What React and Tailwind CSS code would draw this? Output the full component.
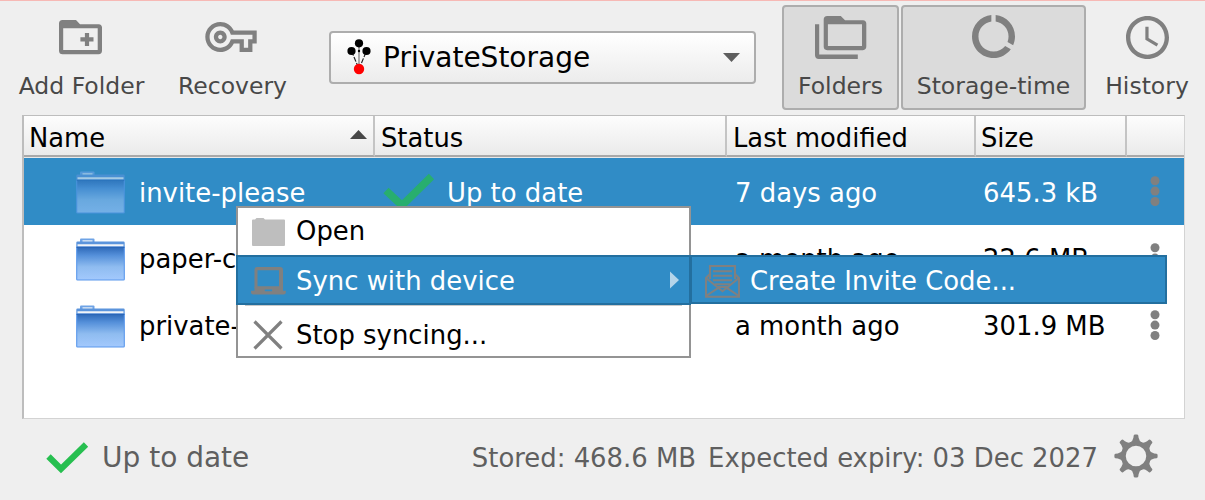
import React from "react";

const GREY = "#808080";

function AddFolderIcon() {
  return (
    <svg width="43" height="35" viewBox="0 0 43 35" fill={GREY}>
      <path fillRule="evenodd" d="M3.5 0H17l4 4.2h18.7a3.5 3.5 0 0 1 3.3 3.4v23.2a3.6 3.6 0 0 1-3.4 3.5H3.6A3.6 3.6 0 0 1 0 30.8V3.6A3.6 3.6 0 0 1 3.5 0zM4.2 8.3V30h34.5V8.3z" />
      <path d="M25.9 13h4.2v4.3h4.4v4.2h-4.4v4.400h-4.200v-4.400h-4.500v-4.200h4.500z" />
    </svg>
  );
}

function KeyIcon() {
  return (
    <svg width="52" height="30" viewBox="0 5 24 14" fill={GREY}>
      <path d="M22 19h-6v-4h-2.68c-1.14 2.42-3.6 4-6.32 4-3.86 0-7-3.14-7-7s3.14-7 7-7c2.72 0 5.17 1.58 6.32 4H24v6h-2v4zm-4-2h2v-4h2v-2H11.94l-.23-.67C11.01 8.34 9.11 7 7 7c-2.76 0-5 2.24-5 5s2.24 5 5 5c2.11 0 4.01-1.34 4.71-3.33l.23-.67H18v4zM7 15c-1.65 0-3-1.35-3-3s1.35-3 3-3 3 1.35 3 3-1.35 3-3 3zm0-4c-.55 0-1 .45-1 1s.45 1 1 1 1-.45 1-1-.45-1-1-1z" />
    </svg>
  );
}

function FoldersIcon() {
  return (
    <svg width="52" height="43" viewBox="0 0 52 43" fill={GREY}>
      <path d="M0 8.3h4.2v30.3h38.6v4.3H3.8A3.8 3.8 0 0 1 0 39.2z" />
      <path fillRule="evenodd" d="M12.3 0h13.5l4.2 4.2h18a3.5 3.5 0 0 1 3.3 3.4v23a3.6 3.6 0 0 1-3.4 3.6H12.2a3.6 3.6 0 0 1-3.5-3.6V3.6A3.6 3.6 0 0 1 12.3 0zM12.9 8.3v21.7H47V8.3z" />
    </svg>
  );
}

function UsageIcon() {
  return (
    <svg width="43" height="43" viewBox="2 2 20 20" fill={GREY}>
      <path d="M13 2.05v3.03c3.39.49 6 3.39 6 6.92 0 .9-.18 1.75-.48 2.54l2.6 1.53c.56-1.24.88-2.62.88-4.07 0-5.18-3.95-9.45-9-9.95zM12 19c-3.87 0-7-3.13-7-7 0-3.53 2.61-6.43 6-6.92V2.05c-5.06.5-9 4.76-9 9.95 0 5.52 4.47 10 9.99 10 3.31 0 6.24-1.61 8.06-4.09l-2.6-1.53C16.17 17.98 14.21 19 12 19z" />
    </svg>
  );
}

function ClockIcon() {
  return (
    <svg width="43" height="43" viewBox="2 2 20 20" fill={GREY}>
      <path d="M11.99 2C6.47 2 2 6.48 2 12s4.47 10 9.99 10C17.52 22 22 17.52 22 12S17.52 2 11.99 2zM12 20c-4.42 0-8-3.58-8-8s3.58-8 8-8 8 3.58 8 8-3.58 8-8 8zm.5-13H11v6l5.25 3.15.75-1.23-4.5-2.67z" />
    </svg>
  );
}

function GridLogo() {
  return (
    <svg width="24" height="36" viewBox="0 0 24 36" className="mb-[2px]">
      <g stroke="#222" strokeWidth="1.2">
        <path d="M12 4v26" stroke="#777" />
        <path d="M4.5 12 12 30 19.500 12" fill="none" strokeDasharray="5 1.500" />
      </g>
      <circle cx="12" cy="4.300" r="4.100" />
      <circle cx="4.500" cy="12" r="4.100" />
      <circle cx="19.500" cy="12" r="4.100" />
      <circle cx="12" cy="12" r="1.200" />
      <circle cx="12" cy="30" r="5.200" fill="#f00" />
    </svg>
  );
}

function BlueFolder({ selected }) {
  return (
    <svg width="49" height="43" viewBox="0 0 49 43" className={selected ? "mt-px opacity-60" : "mt-[2px]"}>
      <defs>
        <linearGradient id="folderFront" x1="0" y1="0" x2="0" y2="1">
          <stop offset="0" stopColor="#2e69b8" />
          <stop offset="0.25" stopColor="#5590da" />
          <stop offset="0.6" stopColor="#8fbcf0" />
          <stop offset="1" stopColor="#a3c9fd" />
        </linearGradient>
      </defs>
      <path d="M4 5V1.500Q4 .5 5 .5H17.500Q18.500 .5 18.500 1.500V5z" fill="#6ea3e6" />
      <path d="M6.500 2.200h10V4h-10z" fill="#dce8f5" />
      <path d="M1.500 3.500h46q1.200 0 1.200 1.200V10H.3V4.700q0-1.200 1.200-1.200z" fill="#5b94dc" />
      <path d="M1.500 6.300h46v2.200h-46z" fill="#f1f4f8" />
      <path d="M.7 9.200h47.600V41.200q0 .8-.8.8h-46q-.8 0-.8-.8z" fill="url(#folderFront)" stroke="#5b98ec" strokeWidth="1.100" />
      <path d="M.7 9.400h47.600" stroke="#2a66b8" strokeWidth="1.400" />
    </svg>
  );
}

function Dots() {
  return (
    <svg width="10" height="31" viewBox="0 0 10 31" fill={GREY}>
      <circle cx="5" cy="4.700" r="4.500" />
      <circle cx="5" cy="15.100" r="4.500" />
      <circle cx="5" cy="25.500" r="4.500" />
    </svg>
  );
}

function Gear() {
  const teeth = [0, 45, 90, 135, 180, 225, 270, 315];
  return (
    <svg width="44" height="44" viewBox="-22 -22 44 44">
      <circle r="12.500" fill="none" stroke={GREY} strokeWidth="4.500" />
      {teeth.map((a) => (
        <path
          key={a}
          transform={`rotate(${a})`}
          fill={GREY}
          d="M-6.200 -13.200Q-3.300 -14.400 -2.600 -18.200L-2.300 -20.600Q-2 -21.600 -1 -21.600H1Q2 -21.600 2.300 -20.600L2.600 -18.200Q3.300 -14.400 6.200 -13.200L3 -11H-3Z"
        />
      ))}
    </svg>
  );
}

function ToolButton({ icon, label, className, iconClass }) {
  return (
    <div className={`flex h-[105px] shrink-0 flex-col items-center text-[23.5px] text-[#484848] ${className}`}>
      <div className={`flex h-[44px] items-center ${iconClass}`}>{icon}</div>
      <div className="mt-auto whitespace-nowrap leading-[30px]">{label}</div>
    </div>
  );
}

const COLS = "grid grid-cols-[351px_352px_249px_151px_57px]";

const rows = [
  { name: "invite-please", status: "Up to date", modified: "7 days ago", size: "645.3 kB", selected: true },
  { name: "paper-c", modified: "a month ago", size: "22.6 MB" },
  { name: "private-", modified: "a month ago", size: "301.9 MB" },
];

function HeaderCell({ children, className = "", last }) {
  return (
    <div className={`flex h-[41px] items-center border-b-2 border-[#a9a9a9] pt-[4px] text-[25.8px] ${last ? "" : "border-r-2 border-r-[#c4c4c4]"} ${className}`}>
      {children}
    </div>
  );
}

function Row({ row }) {
  const shift = row.selected ? "pt-[2px]" : "";
  return (
    <div className={`${COLS} h-[67px] whitespace-nowrap ${row.selected ? "bg-[#308cc6] text-white" : "text-black"}`}>
      <div className="flex items-center pl-[52px]">
        <BlueFolder selected={row.selected} />
        <span className={`ml-[14px] ${shift}`}>{row.name}</span>
      </div>
      <div className="flex items-center pl-[8px]">
        {row.status && (
          <>
            <svg width="52" height="38" viewBox="0 0 52 38" className="shrink-0">
              <path d="M3 17.500 19 32.500 48.500 3.500" fill="none" stroke="#28ae6e" strokeWidth="7.500" />
            </svg>
            <span className={`ml-[12px] ${shift}`}>{row.status}</span>
          </>
        )}
      </div>
      <div className={`flex items-center pl-[8px] ${shift}`}>{row.modified}</div>
      <div className={`flex items-center pl-[7px] ${shift}`}>{row.size}</div>
      <div className="flex items-center pl-[23px]"><Dots /></div>
    </div>
  );
}

function ContextMenu() {
  return (
    <div className="absolute left-[236px] top-[205px] w-[455px] whitespace-nowrap text-[25.9px] text-black">
      <div className="flex h-[152px] flex-col border-2 border-[#949494] bg-white">
        <div className="flex h-[47px] shrink-0 items-center pl-[14px]">
          <svg width="33" height="28" viewBox="0 0 33 28" className="mt-px" fill="#bebebe">
            <path d="M1 1.500h2L4.500 0h7l1.500 1.500h19q1 0 1 1V27q0 1-1 1H1q-1 0-1-1V2.500q0-1 1-1z" />
          </svg>
          <span className="ml-[11px] pb-[1px]">Open</span>
        </div>
        <div className="-mx-[2px] flex h-[50px] shrink-0 items-center border-2 border-[#236f9f] bg-[#308cc6] pl-[13px] text-white">
          <svg width="35" height="28" viewBox="0 0 35 28" className="mt-[2px]" fill={GREY}>
            <path fillRule="evenodd" d="M6 0h23q3 0 3 3v18H3.500V3q0-3 2.500-3zM6.500 3.200h21.500V19.200h-21.500z" />
            <path fillRule="evenodd" d="M0 23.800h3.500V20H32v3.800h2.800v1.800q0 2-2.200 2H2.200q-2.200 0-2.200-2zM13.800 22.500v1.700h7.300v-1.700z" />
          </svg>
          <span className="ml-[10px] pt-[1px]">Sync with device</span>
          <svg width="9" height="18" viewBox="0 0 9 18" className="ml-auto mr-[10px]">
            <path d="M0 .5 9 9 0 17.500z" fill="#b5d5ea" />
          </svg>
        </div>
        <div className="mx-[7px] h-px shrink-0 bg-[#c9c9c9]" />
        <div className="flex h-[50px] shrink-0 items-center pl-[15px]">
          <svg width="30" height="30" viewBox="0 0 30 30" className="mt-[7px]">
            <path d="M1.500 1.500l27 27M28.500 1.500l-27 27" stroke={GREY} strokeWidth="3.200" />
          </svg>
          <span className="ml-[13px] pt-[7px]">Stop syncing...</span>
        </div>
      </div>
      <div className="absolute left-[454px] top-[49px] flex h-[49px] w-[477px] items-center border-2 border-[#236f9f] bg-[#308cc6] pl-[13px] text-white">
        <svg width="35" height="33" viewBox="0 0 35 33" fill="none" stroke={GREY} strokeWidth="2.100" className="mt-[3px]">
          <path d="M5 14V1h25v13M5 9 1 13v18.700h33V13l-4-4" />
          <path d="M1 13 13.500 23 17.500 26.200 21.500 23 34 13M1 31 14 22.300M34 31 21 22.300M13 22h9" />
          <path d="M8 6.300h19M8 10.800h19M8 15.300h19M10 19.300h15" />
        </svg>
        <span className="ml-[10px] pt-[2px]">Create Invite Code...</span>
      </div>
    </div>
  );
}

export default function App() {
  return (
    <div className="relative flex h-[500px] w-[1205px] flex-col overflow-hidden border-t border-[#f7b9b5] bg-[#efefef] font-['DejaVu_Sans',sans-serif] text-[25.9px] leading-[32px] text-black">
      <div className="flex h-[114px] shrink-0 items-start pt-[4px]">
        <ToolButton icon={<AddFolderIcon />} label="Add Folder" className="ml-[16px] w-[131px] pb-[9px] pt-[10px]" iconClass="pr-[2px]" />
        <ToolButton icon={<KeyIcon />} label="Recovery" className="ml-[25px] w-[121px] pb-[9px] pt-[10px]" iconClass="pr-[3px]" />
        <div className="ml-[36px] mt-[26px] flex h-[53px] w-[427px] items-center rounded-[4px] border-2 border-[#adadad] bg-linear-to-b from-white to-[#ececec] pl-[16px] text-[28px]">
          <GridLogo />
          <span className="ml-[12px] pt-[1px]">PrivateStorage</span>
          <svg width="17" height="9" viewBox="0 0 17 9" className="ml-auto mr-[14px]">
            <path d="M0 0h17L8.500 9z" fill="#5e5e5e" />
          </svg>
        </div>
        <ToolButton icon={<FoldersIcon />} label="Folders" className="ml-[26px] w-[117px] rounded-[4px] border-2 border-[#adadad] bg-[#dbdbdb] pb-[7px] pt-[8px]" iconClass="" />
        <ToolButton icon={<UsageIcon />} label="Storage-time" className="ml-[2px] w-[185px] rounded-[4px] border-2 border-[#adadad] bg-[#dbdbdb] pb-[7px] pt-[7px]" iconClass="" />
        <ToolButton icon={<ClockIcon />} label="History" className="ml-[16px] w-[90px] pb-[9px] pt-[10px]" iconClass="" />
      </div>

      <div className="ml-[22px] h-[304px] w-[1163px] shrink-0 border border-l-2 border-[#bdbdbd] border-b-[#d3d3d3] border-r-[#d3d3d3] bg-white">
        <div className={`${COLS} h-[42px] bg-linear-to-b from-[#fdfdfd] to-[#e9e9e9]`}>
          <HeaderCell className="justify-between pl-[5px] pr-[6px]">
            <span>Name</span>
            <svg width="17" height="9" viewBox="0 0 17 9" className="mb-[7px]">
              <path d="M0 9h17L8.500 0z" fill="#484848" />
            </svg>
          </HeaderCell>
          <HeaderCell className="pl-[6px]">Status</HeaderCell>
          <HeaderCell className="pl-[6px]">Last modified</HeaderCell>
          <HeaderCell className="pl-[5px]">Size</HeaderCell>
          <HeaderCell last />
        </div>
        {rows.map((row) => (
          <Row key={row.name} row={row} />
        ))}
      </div>

      <div className="flex h-[77px] items-center pl-[46px] pr-[47px] text-[#5f5f5f]">
        <svg width="43" height="33" viewBox="0 0 43 33">
          <path d="M2.500 15.500 15 28 40 3.500" fill="none" stroke="#27bf50" strokeWidth="6.200" />
        </svg>
        <span className="ml-[13px] text-[28px]">Up to date</span>
        <span className="ml-auto">Stored: 468.6 MB</span>
        <span className="ml-[12px]">Expected expiry: 03 Dec 2027</span>
        <span className="ml-[16px] flex pb-[3px]"><Gear /></span>
      </div>

      <ContextMenu />
    </div>
  );
}
